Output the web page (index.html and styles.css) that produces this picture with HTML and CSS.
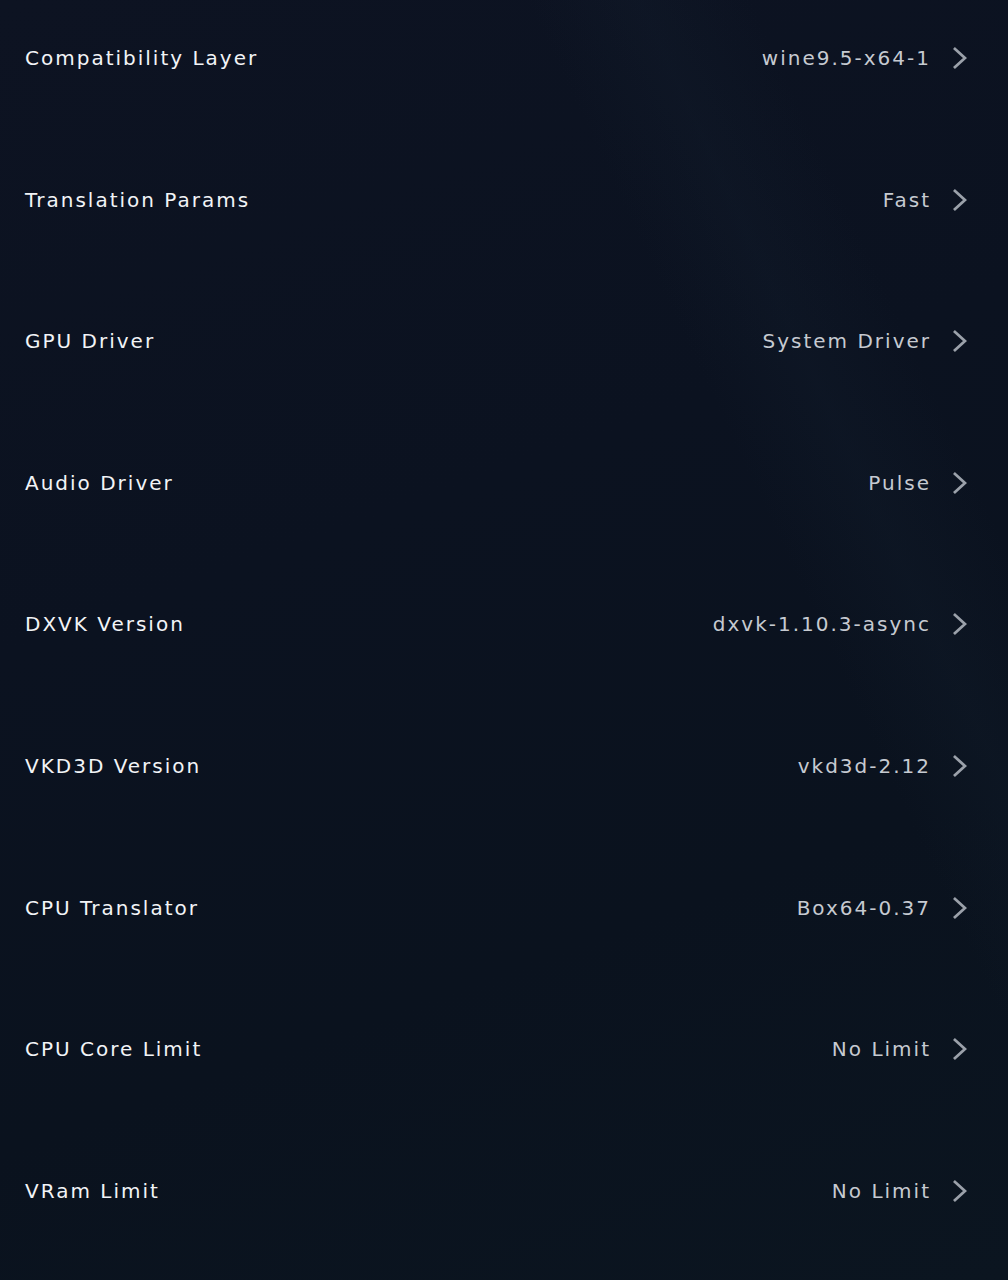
FILE: index.html
```html
<!DOCTYPE html>
<html>
<head>
<meta charset="utf-8">
<link rel="stylesheet" href="styles.css">
</head>
<body>
<div class="list">
  <div class="row"><span class="label">Compatibility Layer</span><span class="value">wine9.5-x64-1</span><svg class="chev" viewBox="0 0 14 22"><path d="M2 2 L12 11 L2 20"/></svg></div>
  <div class="row"><span class="label">Translation Params</span><span class="value">Fast</span><svg class="chev" viewBox="0 0 14 22"><path d="M2 2 L12 11 L2 20"/></svg></div>
  <div class="row"><span class="label">GPU Driver</span><span class="value">System Driver</span><svg class="chev" viewBox="0 0 14 22"><path d="M2 2 L12 11 L2 20"/></svg></div>
  <div class="row"><span class="label">Audio Driver</span><span class="value">Pulse</span><svg class="chev" viewBox="0 0 14 22"><path d="M2 2 L12 11 L2 20"/></svg></div>
  <div class="row"><span class="label">DXVK Version</span><span class="value">dxvk-1.10.3-async</span><svg class="chev" viewBox="0 0 14 22"><path d="M2 2 L12 11 L2 20"/></svg></div>
  <div class="row"><span class="label">VKD3D Version</span><span class="value">vkd3d-2.12</span><svg class="chev" viewBox="0 0 14 22"><path d="M2 2 L12 11 L2 20"/></svg></div>
  <div class="row"><span class="label">CPU Translator</span><span class="value">Box64-0.37</span><svg class="chev" viewBox="0 0 14 22"><path d="M2 2 L12 11 L2 20"/></svg></div>
  <div class="row"><span class="label">CPU Core Limit</span><span class="value">No Limit</span><svg class="chev" viewBox="0 0 14 22"><path d="M2 2 L12 11 L2 20"/></svg></div>
  <div class="row"><span class="label">VRam Limit</span><span class="value">No Limit</span><svg class="chev" viewBox="0 0 14 22"><path d="M2 2 L12 11 L2 20"/></svg></div>
</div>
</body>
</html>
```
FILE: styles.css
```css
html, body {
  margin: 0;
  padding: 0;
  height: 1280px;
  overflow: hidden;
}
body {
  background:
    linear-gradient(65deg, rgba(22,34,50,0) 70%, rgba(24,38,54,0.18) 77%, rgba(22,34,50,0) 84%),
    linear-gradient(160deg, #0d1322 0%, #0b1220 40%, #0a121e 70%, #0b1520 100%);
  font-family: "DejaVu Sans", sans-serif;
}
.list {
  display: flex;
  flex-direction: column;
}
.row {
  height: 141.6px;
  box-sizing: border-box;
  padding: 0 41px 25.6px 25px;
  display: flex;
  align-items: center;
}
.label {
  flex: 1;
  color: #f2f4f7;
  font-size: 20px;
  letter-spacing: 2px;
}
.value {
  color: #c6cad1;
  font-size: 20px;
  letter-spacing: 2px;
  margin-right: -2px;
}
.chev {
  width: 14px;
  height: 22px;
  margin-left: 24px;
  fill: none;
  stroke: #9ba1aa;
  stroke-width: 2.8;
  stroke-linecap: square;
}
```
